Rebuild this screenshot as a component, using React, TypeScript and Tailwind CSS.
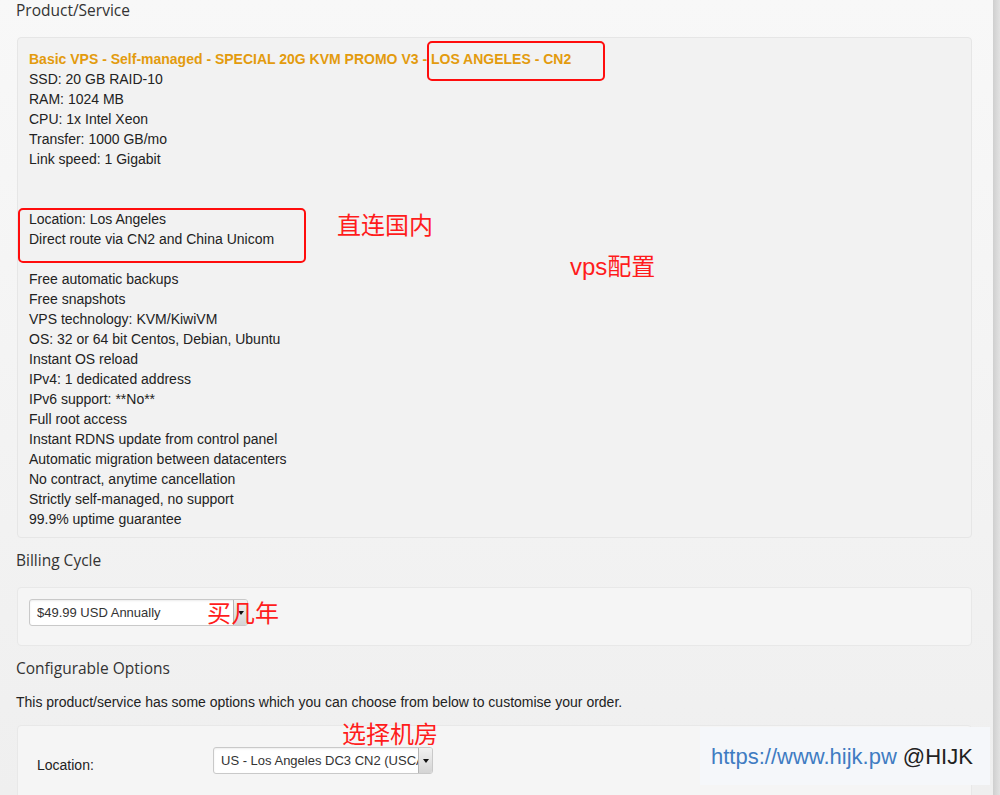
const specs = [
  "SSD: 20 GB RAID-10",
  "RAM: 1024 MB",
  "CPU: 1x Intel Xeon",
  "Transfer: 1000 GB/mo",
  "Link speed: 1 Gigabit",
  "",
  "",
  "Location: Los Angeles",
  "Direct route via CN2 and China Unicom",
  "",
  "Free automatic backups",
  "Free snapshots",
  "VPS technology: KVM/KiwiVM",
  "OS: 32 or 64 bit Centos, Debian, Ubuntu",
  "Instant OS reload",
  "IPv4: 1 dedicated address",
  "IPv6 support: **No**",
  "Full root access",
  "Instant RDNS update from control panel",
  "Automatic migration between datacenters",
  "No contract, anytime cancellation",
  "Strictly self-managed, no support",
  "99.9% uptime guarantee",
];

function FakeSelect({ value, width }: { value: string; width: string }) {
  return (
    <div
      className={`${width} h-[27px] flex items-stretch bg-white border border-[#c9c9c9] rounded-[3px] shadow-[inset_0_1px_2px_rgba(0,0,0,0.08)] overflow-hidden`}
    >
      <div className="flex-1 min-w-0 px-[7px] flex items-center text-[13px] text-[#333] whitespace-nowrap overflow-hidden">
        {value}
      </div>
      <div className="w-[14px] border-l border-[#b5b5b5] bg-gradient-to-b from-[#f2f2f2] to-[#d4d4d4] flex items-center justify-center">
        <div className="w-0 h-0 border-l-[3px] border-r-[3px] border-t-[4px] border-l-transparent border-r-transparent border-t-[#111]" />
      </div>
    </div>
  );
}

const heading = "h-[22px] leading-[22px] text-[15.5px] text-[#333] font-['Open_Sans',sans-serif]";
const redText =
  "absolute leading-none text-[24px] text-[#ff1c1c] font-['Liberation_Sans','Noto_Sans_CJK_SC',sans-serif] whitespace-nowrap";

export default function App() {
  return (
    <div className="flex h-[795px] overflow-hidden font-['Liberation_Sans',Arial,sans-serif]">
      <div className="relative flex-1 bg-gradient-to-b from-[#f8f8f8] to-[#efefef] pl-4 pr-[21px]">
        <h2 className={`${heading} -mt-[1px]`}>Product/Service</h2>

        <div className="mt-[16px] ml-[1px] border border-[#e6e6e6] rounded-[4px] bg-[#f2f2f2] px-[11px] pt-[11px] pb-[8px] text-[14px] leading-[20px] text-[#222]">
          <div className="font-bold text-[#e39b0e]">
            Basic VPS - Self-managed - SPECIAL 20G KVM PROMO V3 - LOS ANGELES - CN2
          </div>
          {specs.map((s, i) => (
            <div key={i} className="h-[20px]">
              {s}
            </div>
          ))}
        </div>

        <h2 className={`${heading} mt-[11px]`}>Billing Cycle</h2>
        <div className="mt-[16px] ml-[1px] border border-[#e8e8e8] rounded-[4px] bg-[#f5f5f5] px-[11px] pt-[11px] pb-[19px]">
          <FakeSelect value="$49.99 USD Annually" width="w-[219px]" />
        </div>

        <h2 className={`${heading} mt-[11px]`}>Configurable Options</h2>
        <p className="mt-[13px] text-[14px] leading-[20px] text-[#222]">
          This product/service has some options which you can choose from below to customise your order.
        </p>
        <div className="mt-[13px] ml-[1px] border border-[#e8e8e8] rounded-[4px] bg-[#f5f5f5] pl-[19px] pt-[21px] pb-[30px] flex">
          <div className="w-[176px] mt-[8px] text-[14px] leading-[20px] text-[#222]">Location:</div>
          <FakeSelect value="US - Los Angeles DC3 CN2 (USCA_9)" width="w-[220px]" />
        </div>

        {/* annotations */}
        <div className="absolute left-[427px] top-[41px] w-[178px] h-[40px] border-2 border-[#ff0d0d] rounded-[5px]" />
        <div className="absolute left-[18px] top-[208px] w-[288px] h-[55px] border-2 border-[#ff0d0d] rounded-[5px]" />
        <div className={`${redText} left-[337px] top-[214px]`}>直连国内</div>
        <div className={`${redText} left-[570px] top-[255px]`}>vps配置</div>
        <div className={`${redText} left-[207px] top-[602px]`}>买几年</div>
        <div className={`${redText} left-[342px] top-[723px]`}>选择机房</div>

        <div className="absolute left-[700px] top-[727px] w-[290px] h-[58px] bg-[#f5f7fa] flex items-center pl-[11px] text-[22px] font-['Liberation_Sans',sans-serif] whitespace-nowrap">
          <span className="text-[#3f7cc2]">https://www.hijk.pw</span>
          <span className="ml-[6px] text-[#222]">@HIJK</span>
        </div>
      </div>
      <div className="w-[7px] bg-gradient-to-r from-[#cfcfcf] to-[#e2e2e2]" />
    </div>
  );
}
